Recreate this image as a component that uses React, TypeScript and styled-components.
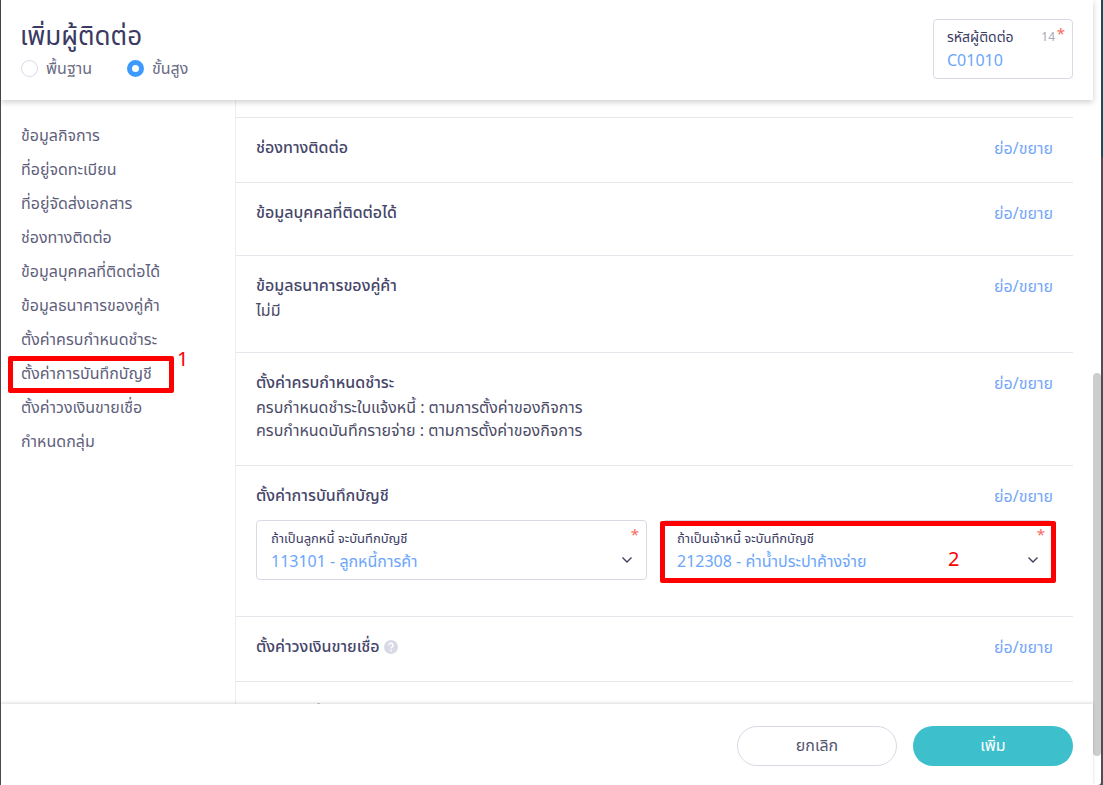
import * as React from "react";
import styled, { createGlobalStyle } from "styled-components";

const GlobalStyle = createGlobalStyle`
    html, body {
        margin: 0;
        padding: 0;
        height: 100%;
        overflow: hidden;
        background: #4a4a4a;
        font-family: "Noto Sans", "Noto Sans Thai", "DejaVu Sans", sans-serif;
    }
`

const Screen = styled.div`
    width: 1103px;
    height: 785px;
    display: flex;
    background: linear-gradient(90deg, #4a4a4a 0 50%, #175058 50% 100%) no-repeat, #4f4f4f;
    background-size: 100% 157px;
`

const Modal = styled.div`
    margin-left: 1px;
    width: 1092px;
    height: 785px;
    background: #fff;
    display: flex;
    flex-direction: column;
    flex: none;
    border-bottom-left-radius: 3px;
`

const ScrollGutter = styled.div`
    width: 8px;
    background: #fff;
    flex: none;
    border-bottom-right-radius: 3px;
`

const ScrollThumb = styled.div`
    margin-top: 373px;
    height: 383px;
    background: #cdcdcd;
    border-radius: 4px;
`

const Header = styled.header`
    height: 100px;
    flex: none;
    position: relative;
    z-index: 2;
    box-sizing: border-box;
    padding: 19px 20px 0 19px;
    display: flex;
    justify-content: space-between;
    box-shadow: 0 2px 6px rgba(0, 0, 0, 0.2);
`

const Title = styled.h1`
    margin: 0;
    font-size: 26px;
    line-height: 32px;
    font-weight: 400;
    color: #3a3a63;
`

const RadioRow = styled.div`
    display: flex;
    gap: 35px;
    margin-top: 7px;
    padding-left: 1px;
`

const RadioOption = styled.label`
    display: flex;
    align-items: center;
    gap: 8px;
    font-size: 16px;
    line-height: 20px;
    color: #6b6b85;
`

const RadioDot = styled.span<{ $checked?: boolean }>`
    box-sizing: border-box;
    width: 17px;
    height: 17px;
    border-radius: 50%;
    background: #fff;
    border: ${(p) => (p.$checked ? "5px solid #3d9bff" : "1px solid #d9d9e6")};
`

const CodeBox = styled.div`
    position: relative;
    box-sizing: border-box;
    width: 140px;
    height: 60px;
    border: 1px solid #d9d9e6;
    border-radius: 4px;
    padding: 7px 13px;
`

const CodeLabel = styled.div`
    font-size: 14px;
    line-height: 20px;
    color: #3a3a63;
`

const FieldLabel = styled.div`
    font-size: 13px;
    line-height: 20px;
    color: #3a3a63;
`

const FieldValue = styled.div`
    font-size: 16px;
    line-height: 22px;
    margin-top: 2px;
    color: #6ca6fb;
`

const Counter = styled.span`
    position: absolute;
    top: 9px;
    right: 17px;
    font-size: 12px;
    line-height: 16px;
    color: #a9a9b8;
`

const Asterisk = styled.span`
    position: absolute;
    top: 5px;
    right: 7px;
    font-size: 15px;
    line-height: 16px;
    color: #f8685c;
`

const Body = styled.div`
    flex: 1;
    min-height: 0;
    display: flex;
    overflow: hidden;
`

const SideNav = styled.nav`
    width: 235px;
    flex: none;
    box-sizing: border-box;
    padding: 19px 0 0 20px;
    border-right: 1px solid #ececf1;
`

const NavItem = styled.div`
    position: relative;
    height: 34px;
    display: flex;
    align-items: center;
    font-size: 16px;
    color: #5f5f7c;
`

const RedFrame = styled.div`
    position: absolute;
    border: 5px solid #fe0000;
    border-radius: 2px;
    box-sizing: border-box;
    pointer-events: none;
`

const NavFrame = styled(RedFrame)`
    left: -13px;
    top: -1px;
    width: 166px;
    height: 37px;
`

const RedNote = styled.span`
    position: absolute;
    font-family: "Noto Sans", sans-serif;
    font-size: 20px;
    line-height: 22px;
    color: #fe0000;
`

const NavNote = styled(RedNote)`
    left: 156px;
    top: -9px;
`

const Content = styled.div`
    flex: 1;
    min-width: 0;
    box-sizing: border-box;
    padding: 17px 20px 0 0;
`

const Section = styled.section<{ $height: number }>`
    position: relative;
    box-sizing: border-box;
    height: ${(p) => p.$height}px;
    flex: none;
    padding: 20px 20px 0;
    border-top: 1px solid #e6e6ec;
`

const SectionHead = styled.div`
    display: flex;
    justify-content: space-between;
    align-items: center;
    height: 20px;
`

const SectionTitle = styled.div`
    display: flex;
    align-items: center;
    gap: 4px;
    font-size: 16px;
    font-weight: 500;
    color: #46466a;
`

const Toggle = styled.span`
    padding-top: 2px;
    font-size: 16px;
    color: #74a6f8;
`

const Details = styled.div`
    margin-top: 3px;
`

const Detail = styled.div`
    font-size: 16px;
    line-height: 23px;
    color: #4b4b66;
`

const SelectRow = styled.div`
    display: grid;
    grid-template-columns: 391px 391px;
    column-gap: 15px;
    margin-top: 14px;
`

const SelectBox = styled.div`
    position: relative;
    box-sizing: border-box;
    height: 60px;
    border: 1px solid #d9d9e6;
    border-radius: 4px;
    padding: 7px 14px;
`

const SelectFrame = styled(RedFrame)`
    left: -3px;
    top: 0;
    width: 396px;
    height: 62px;
`

const SelectNote = styled(RedNote)`
    left: 285px;
    top: 27px;
`

const ChevronHolder = styled.span`
    position: absolute;
    right: 13px;
    top: 35px;
    display: flex;
`

const Footer = styled.footer`
    height: 81px;
    flex: none;
    position: relative;
    z-index: 2;
    box-sizing: border-box;
    padding: 22px 20px 0 0;
    background: #fff;
    display: flex;
    justify-content: flex-end;
    gap: 16px;
    box-shadow: 0 -1px 3px rgba(0, 0, 0, 0.15);
`

const PillButton = styled.button<{ $primary?: boolean }>`
    box-sizing: border-box;
    width: 160px;
    height: 40px;
    border-radius: 20px;
    font-family: inherit;
    font-size: 16px;
    color: ${(p) => (p.$primary ? "#fff" : "#55556f")};
    background: ${(p) => (p.$primary ? "#3ebfcc" : "#fff")};
    border: ${(p) => (p.$primary ? "none" : "1px solid #d9d9e6")};
`

const Chevron = () => (
    <svg width="12" height="8" viewBox="0 0 12 8" fill="none" stroke="#3f3f5f" strokeWidth="1.4">
        <path d="M1.5 1.5 L6 6 L10.5 1.5" />
    </svg>
)

const HelpIcon = () => (
    <svg width="14" height="14" viewBox="0 0 14 14">
        <circle cx="7" cy="7" r="7" fill="#d9d9e6" />
        <path d="M5 5.4 A2 2 0 1 1 7.9 7.1 C7.2 7.5 7 7.8 7 8.6" fill="none" stroke="#fff" strokeWidth="1.5" />
        <circle cx="7" cy="10.6" r="0.9" fill="#fff" />
    </svg>
)

const navItems = [
    "ข้อมูลกิจการ",
    "ที่อยู่จดทะเบียน",
    "ที่อยู่จัดส่งเอกสาร",
    "ช่องทางติดต่อ",
    "ข้อมูลบุคคลที่ติดต่อได้",
    "ข้อมูลธนาคารของคู่ค้า",
    "ตั้งค่าครบกำหนดชำระ",
    "ตั้งค่าการบันทึกบัญชี",
    "ตั้งค่าวงเงินขายเชื่อ",
    "กำหนดกลุ่ม",
]

export default function App() {
    return (
        <Screen>
            <GlobalStyle />
            <Modal>
                <Header>
                    <div>
                        <Title>เพิ่มผู้ติดต่อ</Title>
                        <RadioRow>
                            <RadioOption>
                                <RadioDot />
                                พื้นฐาน
                            </RadioOption>
                            <RadioOption>
                                <RadioDot $checked />
                                ขั้นสูง
                            </RadioOption>
                        </RadioRow>
                    </div>
                    <CodeBox>
                        <CodeLabel>รหัสผู้ติดต่อ</CodeLabel>
                        <FieldValue>C01010</FieldValue>
                        <Counter>14</Counter>
                        <Asterisk>*</Asterisk>
                    </CodeBox>
                </Header>
                <Body>
                    <SideNav>
                        {navItems.map((item, idx) => (
                            <NavItem key={item}>
                                {item}
                                {idx === 7 && (
                                    <React.Fragment>
                                        <NavFrame />
                                        <NavNote>1</NavNote>
                                    </React.Fragment>
                                )}
                            </NavItem>
                        ))}
                    </SideNav>
                    <Content>
                        <Section $height={65}>
                            <SectionHead>
                                <SectionTitle>ช่องทางติดต่อ</SectionTitle>
                                <Toggle>ย่อ/ขยาย</Toggle>
                            </SectionHead>
                        </Section>
                        <Section $height={73}>
                            <SectionHead>
                                <SectionTitle>ข้อมูลบุคคลที่ติดต่อได้</SectionTitle>
                                <Toggle>ย่อ/ขยาย</Toggle>
                            </SectionHead>
                        </Section>
                        <Section $height={97}>
                            <SectionHead>
                                <SectionTitle>ข้อมูลธนาคารของคู่ค้า</SectionTitle>
                                <Toggle>ย่อ/ขยาย</Toggle>
                            </SectionHead>
                            <Details>
                                <Detail>ไม่มี</Detail>
                            </Details>
                        </Section>
                        <Section $height={113}>
                            <SectionHead>
                                <SectionTitle>ตั้งค่าครบกำหนดชำระ</SectionTitle>
                                <Toggle>ย่อ/ขยาย</Toggle>
                            </SectionHead>
                            <Details>
                                <Detail>ครบกำหนดชำระใบแจ้งหนี้ : ตามการตั้งค่าของกิจการ</Detail>
                                <Detail>ครบกำหนดบันทึกรายจ่าย : ตามการตั้งค่าของกิจการ</Detail>
                            </Details>
                        </Section>
                        <Section $height={151}>
                            <SectionHead>
                                <SectionTitle>ตั้งค่าการบันทึกบัญชี</SectionTitle>
                                <Toggle>ย่อ/ขยาย</Toggle>
                            </SectionHead>
                            <SelectRow>
                                <SelectBox>
                                    <FieldLabel>ถ้าเป็นลูกหนี้ จะบันทึกบัญชี</FieldLabel>
                                    <FieldValue>113101 - ลูกหนี้การค้า</FieldValue>
                                    <Asterisk>*</Asterisk>
                                    <ChevronHolder><Chevron /></ChevronHolder>
                                </SelectBox>
                                <SelectBox>
                                    <FieldLabel>ถ้าเป็นเจ้าหนี้ จะบันทึกบัญชี</FieldLabel>
                                    <FieldValue>212308 - ค่าน้ำประปาค้างจ่าย</FieldValue>
                                    <Asterisk>*</Asterisk>
                                    <ChevronHolder><Chevron /></ChevronHolder>
                                    <SelectFrame />
                                    <SelectNote>2</SelectNote>
                                </SelectBox>
                            </SelectRow>
                        </Section>
                        <Section $height={65}>
                            <SectionHead>
                                <SectionTitle>
                                    ตั้งค่าวงเงินขายเชื่อ <HelpIcon />
                                </SectionTitle>
                                <Toggle>ย่อ/ขยาย</Toggle>
                            </SectionHead>
                        </Section>
                        <Section $height={40}>
                            <SectionHead>
                                <SectionTitle>กำหนดกลุ่ม</SectionTitle>
                            </SectionHead>
                        </Section>
                    </Content>
                </Body>
                <Footer>
                    <PillButton>ยกเลิก</PillButton>
                    <PillButton $primary>เพิ่ม</PillButton>
                </Footer>
            </Modal>
            <ScrollGutter>
                <ScrollThumb />
            </ScrollGutter>
        </Screen>
    )
}
